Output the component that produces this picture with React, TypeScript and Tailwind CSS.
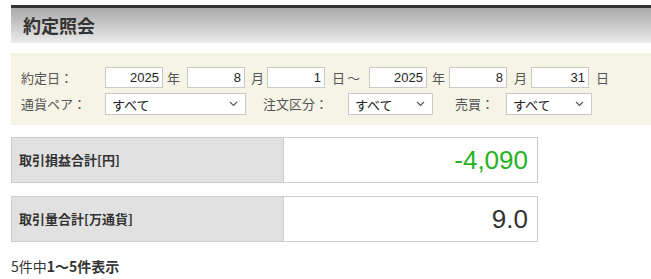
import React from 'react';

const jp = 'font-["Noto_Sans_CJK_JP","Noto_Sans",sans-serif]';
const num = 'font-["Liberation_Sans","Noto_Sans_CJK_JP",sans-serif]';

const DateBox = ({ value }: { value: string }) => (
  <input
    readOnly
    value={value}
    className={`${num} h-[21px] w-[58px] shrink-0 border border-[#c9c9c9] bg-white pr-[3px] text-right text-[13px] text-[#222] outline-none`}
  />
);

const Unit = ({ label, w, pl }: { label: string; w: string; pl: string }) => (
  <span className={`${w} ${pl} shrink-0 text-[13px] text-[#555]`}>{label}</span>
);

// fake select box so the text sits centred like the original
const Select = ({ w }: { w: string }) => (
  <div
    className={`${w} flex h-[22px] shrink-0 items-center justify-between border border-[#c9c9c9] bg-white pl-[6px] pr-[7px] text-[13px] leading-none text-[#222]`}
  >
    <span>すべて</span>
    <svg width="9" height="6" viewBox="0 0 9 6" fill="none">
      <path d="M1 1l3.5 3.5L8 1" stroke="#555" strokeWidth="1.1" />
    </svg>
  </div>
);

const SummaryRow = ({ label, value, green }: { label: string; value: string; green?: boolean }) => (
  <div className="flex h-[46px] w-[527px] border border-[#cdcdcd]">
    <div className="flex w-[272px] items-center border-r border-[#cdcdcd] bg-[#e1e1e1] pl-[7px] text-[13px] font-bold text-[#333]">
      {label}
    </div>
    <div
      className={`${num} flex flex-1 items-center justify-end bg-white pr-[9px] text-[26px] ${
        green ? 'text-[#25b323]' : 'text-[#333]'
      }`}
    >
      {value}
    </div>
  </div>
);

export default function App() {
  return (
    <div className={`${jp} min-h-[279px] w-[651px] bg-white pl-[11px] pt-[5px]`}>
      {/* title bar */}
      <div className="h-[3px] bg-[#333]" />
      <div className="flex h-[35px] items-center bg-gradient-to-b from-[#a9a9a9] to-[#ececec] pl-[12px] text-[18px] font-bold text-[#333]">
        約定照会
      </div>

      {/* search form */}
      <div className="mt-[10px] flex h-[72px] flex-col gap-[5px] bg-[#f6f4e6] pl-[10px] pt-[14px]">
        <div className="flex items-center">
          <span className="w-[84px] shrink-0 text-[13px] text-[#555]">約定日：</span>
          <DateBox value="2025" />
          <Unit label="年" w="w-[24px]" pl="pl-[4px]" />
          <DateBox value="8" />
          <Unit label="月" w="w-[22px]" pl="pl-[6px]" />
          <DateBox value="1" />
          <span className="flex w-[44px] shrink-0 pl-[7px] text-[13px] text-[#555]">日<span className="pl-[2px]">～</span></span>
          <DateBox value="2025" />
          <Unit label="年" w="w-[22px]" pl="pl-[5px]" />
          <DateBox value="8" />
          <Unit label="月" w="w-[24px]" pl="pl-[7px]" />
          <DateBox value="31" />
          <Unit label="日" w="w-[24px]" pl="pl-[7px]" />
        </div>
        <div className="flex items-center">
          <span className="w-[84px] shrink-0 text-[13px] text-[#555]">通貨ペア：</span>
          <Select w="w-[141px]" />
          <span className="w-[102px] shrink-0 pl-[17px] text-[13px] text-[#555]">注文区分：</span>
          <Select w="w-[85px]" />
          <span className="w-[73px] shrink-0 pl-[22px] text-[13px] text-[#555]">売買：</span>
          <Select w="w-[86px]" />
        </div>
      </div>

      {/* totals */}
      <div className="mt-[12px] flex flex-col gap-[13px]">
        <SummaryRow label="取引損益合計[円]" value="-4,090" green />
        <SummaryRow label="取引量合計[万通貨]" value="9.0" />
      </div>

      <p className="mt-[14px] text-[14px] text-[#333]">
        5件中<span className="font-bold">1～5件表示</span>
      </p>
    </div>
  );
}
